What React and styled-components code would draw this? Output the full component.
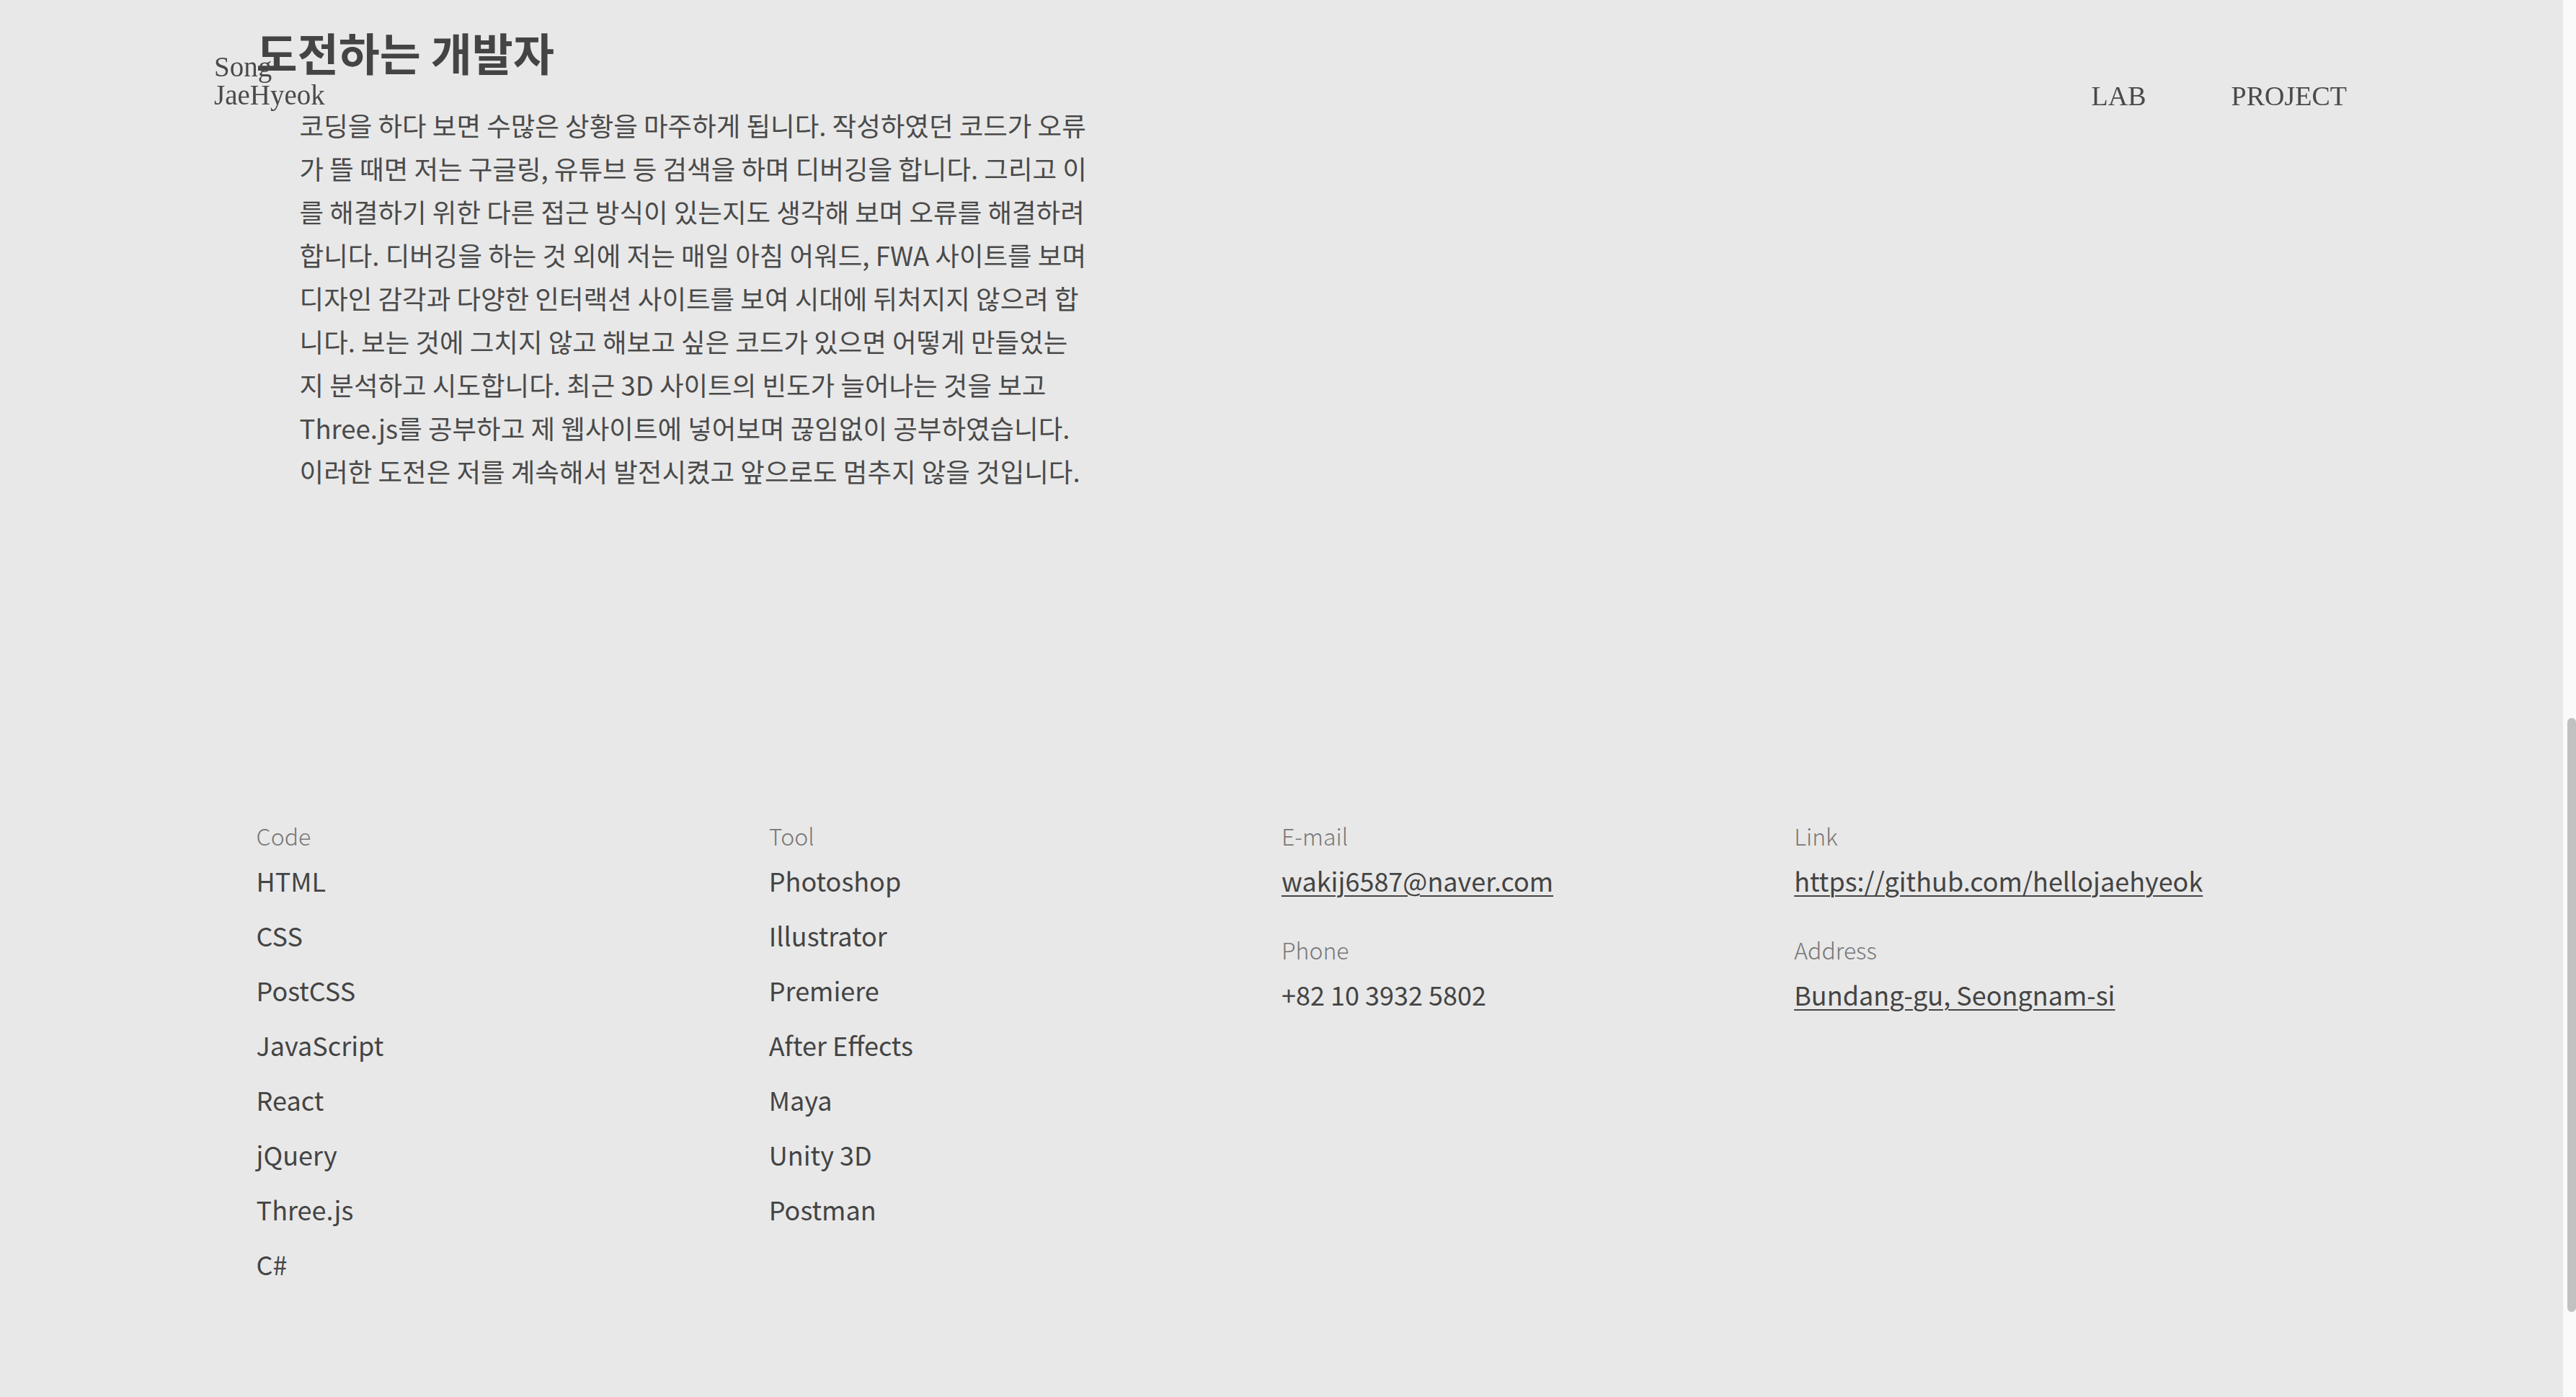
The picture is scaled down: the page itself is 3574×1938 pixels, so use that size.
import React, { useLayoutEffect, useRef, useState } from 'react';
import styled, { createGlobalStyle } from 'styled-components';

// the page is shown scrolled down to the about / contact part
const SCROLL_TOP = 2342;

const codeList = ['HTML', 'CSS', 'PostCSS', 'JavaScript', 'React', 'jQuery', 'Three.js', 'C#'];
const toolList = ['Photoshop', 'Illustrator', 'Premiere', 'After Effects', 'Maya', 'Unity 3D', 'Postman'];

const aboutText =
  '코딩을 하다 보면 수많은 상황을 마주하게 됩니다. 작성하였던 코드가 오류가 뜰 때면 저는 구글링, 유튜브 등 검색을 하며 디버깅을 합니다. ' +
  '그리고 이를 해결하기 위한 다른 접근 방식이 있는지도 생각해 보며 오류를 해결하려 합니다. 디버깅을 하는 것 외에 저는 매일 아침 어워드, FWA 사이트를 보며 ' +
  '디자인 감각과 다양한 인터랙션 사이트를 보여 시대에 뒤처지지 않으려 합니다. 보는 것에 그치지 않고 해보고 싶은 코드가 있으면 어떻게 만들었는지 분석하고 시도합니다. ' +
  '최근 3D 사이트의 빈도가 늘어나는 것을 보고 Three.js를 공부하고 제 웹사이트에 넣어보며 끊임없이 공부하였습니다. ' +
  '이러한 도전은 저를 계속해서 발전시켰고 앞으로도 멈추지 않을 것입니다.';

export default function App() {
  const scrollerRef = useRef(null);
  const [thumb, setThumb] = useState({ top: 0, height: 0 });

  useLayoutEffect(() => {
    const el = scrollerRef.current;
    if (!el) return undefined;
    el.scrollTop = SCROLL_TOP;
    const update = () => {
      const ratio = el.clientHeight / el.scrollHeight;
      setThumb({ top: el.scrollTop * ratio, height: el.clientHeight * ratio });
    };
    update();
    el.addEventListener('scroll', update);
    return () => el.removeEventListener('scroll', update);
  }, []);

  return (
    <>
      <GlobalStyle />
      <Page>
        <Scroller ref={scrollerRef}>
          <Header>
            <HeaderBar>
              <Logo>
                Song
                <br />
                JaeHyeok
              </Logo>
              <Nav>
                <NavLink href="#lab">LAB</NavLink>
                <NavLink href="#project">PROJECT</NavLink>
              </Nav>
            </HeaderBar>
          </Header>

          <Intro />

          <About>
            <Title>도전하는 개발자</Title>
            <Story>{aboutText}</Story>
          </About>

          <Footer>
            <Column>
              <Label>Code</Label>
              {codeList.map((item) => (
                <Item key={item}>{item}</Item>
              ))}
            </Column>
            <Column>
              <Label>Tool</Label>
              {toolList.map((item) => (
                <Item key={item}>{item}</Item>
              ))}
            </Column>
            <Column>
              <Group>
                <Label>E-mail</Label>
                <Item as="a" href="mailto:wakij6587@naver.com" $underline>
                  wakij6587@naver.com
                </Item>
              </Group>
              <Group>
                <Label>Phone</Label>
                <Item>+82 10 3932 5802</Item>
              </Group>
            </Column>
            <Column>
              <Group>
                <Label>Link</Label>
                <Item as="a" href="https://github.com/hellojaehyeok" $underline>
                  https://github.com/hellojaehyeok
                </Item>
              </Group>
              <Group>
                <Label>Address</Label>
                <Item as="a" href="#map" $underline>
                  Bundang-gu, Seongnam-si
                </Item>
              </Group>
            </Column>
          </Footer>
        </Scroller>

        <Rail>
          <Thumb style={{ marginTop: thumb.top, height: thumb.height }} />
        </Rail>
      </Page>
    </>
  );
}

const GlobalStyle = createGlobalStyle`
  html, body {
    margin: 0;
    padding: 0;
    height: 100%;
    overflow: hidden;
  }
  body {
    background: #e8e8e8;
    color: #444;
    font-family: "Noto Sans CJK KR", "Noto Sans", sans-serif;
  }
  #root {
    height: 100%;
  }
`;

const Page = styled.div`
  display: flex;
  height: 100vh;
  background: #e8e8e8;
`;

const Scroller = styled.div`
  flex: 1;
  min-width: 0;
  height: 100%;
  overflow-y: scroll;
  scrollbar-width: none;

  &::-webkit-scrollbar {
    display: none;
  }
`;

const Rail = styled.div`
  flex: 0 0 18px;
  height: 100%;
  background: #fafafa;
`;

const Thumb = styled.div`
  width: 12px;
  margin-left: 6px;
  background: #c1c1c1;
  border-radius: 6px;
`;

const Header = styled.header`
  position: sticky;
  top: 0;
  height: 0;
  z-index: 10;
`;

const HeaderBar = styled.div`
  display: flex;
  justify-content: space-between;
  align-items: flex-end;
  padding: 73px 300px 0 297px;
`;

const Logo = styled.div`
  font-family: "Liberation Serif", "Times New Roman", serif;
  font-size: 39px;
  line-height: 39px;
  color: #4a4a4a;
`;

const Nav = styled.nav`
  display: flex;
  gap: 118px;
  margin-bottom: -1px;
`;

const NavLink = styled.a`
  font-family: "Liberation Serif", "Times New Roman", serif;
  font-size: 38px;
  line-height: 38px;
  color: #4a4a4a;
  text-decoration: none;
`;

const Intro = styled.section`
  height: ${SCROLL_TOP}px;
`;

const About = styled.section`
  padding: 33px 10% 0;
`;

const Title = styled.h2`
  margin: 0 0 32px;
  font-size: 62px;
  line-height: 79px;
  font-weight: 700;
  color: #444;
`;

const Story = styled.p`
  margin: 0 0 0 60px;
  max-width: 1099px;
  font-size: 36.5px;
  line-height: 60px;
  font-weight: 400;
  color: #4a4a4a;
`;

const Footer = styled.footer`
  display: grid;
  grid-template-columns: repeat(4, 1fr);
  padding: 451px 10% 425px;
`;

const Column = styled.div`
  display: flex;
  flex-direction: column;
  align-items: flex-start;
`;

const Group = styled.div`
  display: flex;
  flex-direction: column;
  align-items: flex-start;
  & + & {
    margin-top: 34px;
  }
`;

const Label = styled.span`
  font-size: 32px;
  line-height: 48px;
  font-weight: 300;
  color: #777;
`;

const Item = styled.span`
  font-size: 36px;
  line-height: 76px;
  font-weight: 400;
  color: #444;
  text-decoration: ${(p) => (p.$underline ? 'underline' : 'none')};
  text-underline-offset: 5px;
  text-decoration-thickness: 2px;
`;
